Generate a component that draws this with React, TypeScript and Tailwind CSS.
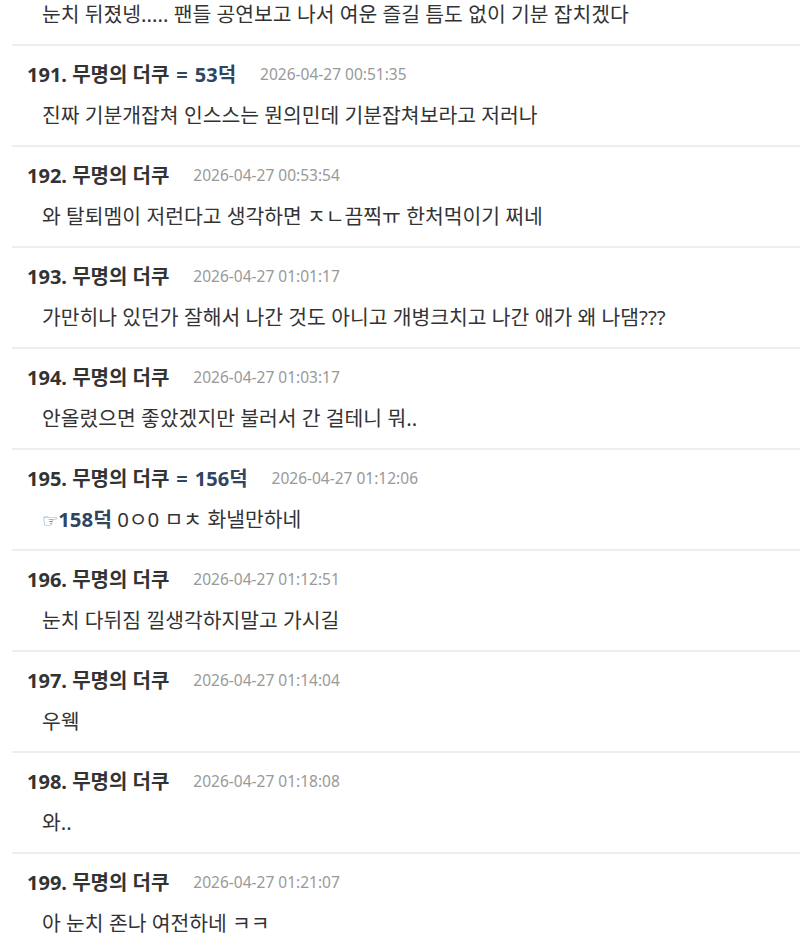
import React from "react";

type Comment = {
  no: number;
  reply?: string;
  date: string;
  body: React.ReactNode;
};

const comments: Comment[] = [
  { no: 191, reply: "53덕", date: "2026-04-27 00:51:35", body: "진짜 기분개잡쳐 인스스는 뭔의민데 기분잡쳐보라고 저러나" },
  { no: 192, date: "2026-04-27 00:53:54", body: "와 탈퇴멤이 저런다고 생각하면 ㅈㄴ끔찍ㅠ 한처먹이기 쩌네" },
  { no: 193, date: "2026-04-27 01:01:17", body: "가만히나 있던가 잘해서 나간 것도 아니고 개병크치고 나간 애가 왜 나댐???" },
  { no: 194, date: "2026-04-27 01:03:17", body: "안올렸으면 좋았겠지만 불러서 간 걸테니 뭐.." },
  {
    no: 195,
    reply: "156덕",
    date: "2026-04-27 01:12:06",
    body: (
      <>
        <span className="text-[#5a6f88] text-[18px] leading-none font-['DejaVu_Sans',sans-serif]">☞</span>
        <span className="font-bold text-[#2f4560]">158덕</span> 0ㅇ0 ㅁㅊ 화낼만하네
      </>
    ),
  },
  { no: 196, date: "2026-04-27 01:12:51", body: "눈치 다뒤짐 낄생각하지말고 가시길" },
  { no: 197, date: "2026-04-27 01:14:04", body: "우웩" },
  { no: 198, date: "2026-04-27 01:18:08", body: "와.." },
  { no: 199, date: "2026-04-27 01:21:07", body: "아 눈치 존나 여전하네 ㅋㅋ" },
];

function CommentItem({ c }: { c: Comment }) {
  return (
    <div className="ml-3 border-t-2 border-[#eeeeee] pt-[18px] pb-[18px]">
      <div className="flex items-center h-[22px] pl-[15px] whitespace-nowrap">
        <span className="text-[20px] font-bold text-[#333333]">{c.no}. 무명의 더쿠</span>
        {c.reply && (
          <span className="text-[20px] font-bold text-[#2f4560]">
            <span className="mx-[7px]">=</span>
            {c.reply}
          </span>
        )}
        <span className="ml-[24px] text-[15.5px] text-[#999999]">{c.date}</span>
      </div>
      <div className="mt-[17px] h-[24px] leading-[24px] pl-[30px] text-[20.4px] text-[#333333] whitespace-nowrap">
        {c.body}
      </div>
    </div>
  );
}

export default function App() {
  return (
    <div className="w-[800px] h-[934px] overflow-hidden bg-white font-['Noto_Sans','Noto_Sans_CJK_KR',sans-serif]">
      <div className="ml-3 pt-[2px] pb-[18px]">
        <div className="h-[24px] leading-[24px] pl-[30px] text-[20.4px] text-[#333333] whitespace-nowrap">
          눈치 뒤졌넹..... 팬들 공연보고 나서 여운 즐길 틈도 없이 기분 잡치겠다
        </div>
      </div>
      {comments.map((c) => (
        <CommentItem key={c.no} c={c} />
      ))}
    </div>
  );
}
